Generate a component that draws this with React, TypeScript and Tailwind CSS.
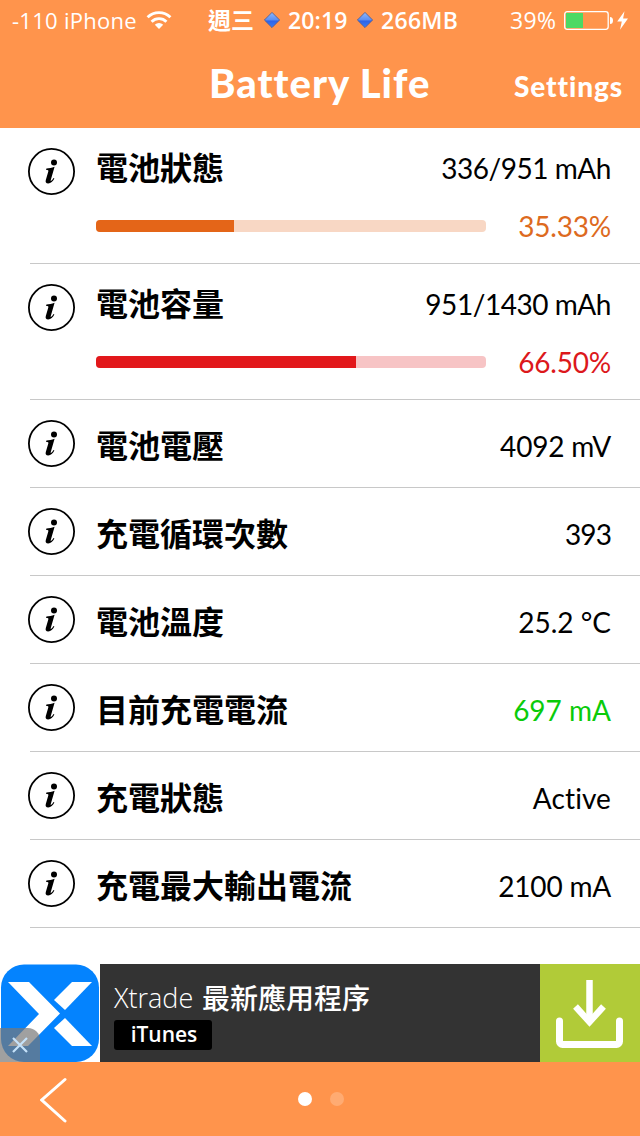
import React from "react";
import clsx from "clsx";

type Row = {
  label: string;
  value: string;
  valueClass: string;
  meter?: {
    percent: string;
    fill: number;
    track: string;
    bar: string;
    text: string;
  };
};

const InfoIcon = () => (
  <svg className="h-12 w-12 shrink-0" viewBox="0 0 48 48" fill="none">
    <circle cx="23.5" cy="23.5" r="22.6" stroke="#000" strokeWidth="1.8" />
    <circle cx="26" cy="14.5" r="3" fill="#000" />
    <path
      d="M18.400 20.500c2.800-.2 5.200-.7 8.200-1.700l-3.900 13.400c-.2.8.3.9.8.4.7-.7 1.400-1.600 2-2.600l.9.500c-1.500 2.700-3.600 5-6.200 5-2.200 0-3-1.500-2.400-3.500l2.500-8.600c.3-1.100-.1-1.500-2.200-1.500z"
      fill="#000"
    />
  </svg>
);

const Diamond = () => (
  <svg className="h-4 w-4 shrink-0" viewBox="0 0 16 16">
    <defs>
      <linearGradient id="gem" x1="0" y1="0" x2="0" y2="1">
        <stop offset="0" stopColor="#8db8fb" />
        <stop offset="0.5" stopColor="#5c8ef2" />
        <stop offset="0.56" stopColor="#2f63e6" />
        <stop offset="1" stopColor="#3a7cf4" />
      </linearGradient>
    </defs>
    <path d="M8 .4 15.600 8 8 15.600.4 8z" fill="url(#gem)" stroke="#42599b" strokeWidth="0.8" />
  </svg>
);

const StatusBar = () => {
  return (
    <div className="flex h-10 items-center font-['Open_Sans','Noto_Sans_CJK_TC',sans-serif] text-[22px] leading-10">
      <span className="ml-3 w-[126px] whitespace-nowrap tracking-[0.28px]">-110 iPhone</span>
      <svg className="ml-2 h-[18px] w-[26px]" viewBox="0 0 26 18" fill="none" stroke="#fff" strokeWidth="2.900">
        <path d="M1.600 6.300a16.300 16.300 0 0 1 22.800 0" />
        <path d="M5.600 10.700a10.500 10.500 0 0 1 14.800 0" />
        <path d="M13 18 8.800 13.800a6 6 0 0 1 8.400 0z" fill="#fff" stroke="none" />
      </svg>
      <div className="ml-9 flex items-center font-semibold">
        <span className="w-12 whitespace-nowrap text-[23px] font-bold">週三</span>
        <span className="ml-2 flex"><Diamond /></span>
        <span className="ml-2 w-[61px] whitespace-nowrap text-[23px] tracking-[0.1px]">20:19</span>
        <span className="ml-2 flex"><Diamond /></span>
        <span className="ml-2 w-20 whitespace-nowrap text-[23px] tracking-[0.3px]">266MB</span>
      </div>
      <span className="ml-[49px] w-[49px] whitespace-nowrap text-[23px] tracking-[0.4px]">39%</span>
      <svg className="h-5 w-[76px]" viewBox="0 0 76 20">
        <rect x="5.700" y="1.700" width="43.500" height="17.600" rx="2.500" fill="none" stroke="#fff" strokeWidth="1.300" />
        <rect x="7" y="3" width="17" height="15" fill="#4cd964" />
        <path d="M51 7a3 3.500 0 0 1 0 7z" fill="#fff" />
        <path d="M65.500 1.200 58.200 11.400h4.600L61 19.700 69 8.600h-4.900z" fill="#fff" />
      </svg>
    </div>
  );
};

const Header = () => {
  return (
    <header className="h-32 bg-[#ff944c] text-white">
      <StatusBar />
      <div className="grid h-[88px] grid-cols-[209px_221px_1fr] font-['Lato',sans-serif] font-black [font-variant-ligatures:none]">
        <h1 className="col-start-2 whitespace-nowrap text-[40px] leading-[86px] tracking-[1px]">
          Battery Life
        </h1>
        <button className="mr-[17px] whitespace-nowrap text-right text-[28px] leading-[92px] tracking-[0.9px]">
          Settings
        </button>
      </div>
    </header>
  );
};

const BatteryRow = ({ label, value, valueClass, meter }: Row) => {
  return (
    <li
      className={clsx(
        "ml-[30px] flex border-b border-[#c8c8c8]",
        meter ? "h-[136px]" : "h-[88px]",
      )}
    >
      <div className="-ml-0.5 pt-5">
        <InfoIcon />
      </div>
      <div className={clsx("ml-5 mr-[29px] flex-1", meter ? "pt-4" : "pt-[22px]")}>
        <div className="flex h-12 items-center justify-between whitespace-nowrap">
          <span className="pb-1 font-['Noto_Sans_CJK_TC',sans-serif] text-[32px] font-bold leading-[48px]">
            {label}
          </span>
          <span className={clsx("font-['Lato',sans-serif] text-[28px] [font-variant-ligatures:none]", valueClass)}>
            {value}
          </span>
        </div>
        {meter && (
          <div className="mt-2.5 flex h-12 items-center justify-between">
            <div className={clsx("h-3 w-[390px] overflow-hidden rounded", meter.track)}>
              <div className={clsx("h-full", meter.bar)} style={{ width: meter.fill }} />
            </div>
            <span className={clsx("font-['Lato',sans-serif] text-[28px] tracking-[-0.2px]", meter.text)}>
              {meter.percent}
            </span>
          </div>
        )}
      </div>
    </li>
  );
};

const AdBanner = () => {
  return (
    <div className="flex h-[98px] bg-[#333333] text-white">
      <div className="relative w-[100px] bg-white">
        <svg className="h-[98px] w-[100px]" viewBox="0 0 100 98">
          <rect x="1" y="0.500" width="98" height="97.500" rx="23" fill="#0483fe" />
          <path d="M8 18h21l31 31.500L28 82H8l31-32z" fill="#fff" />
          <path d="M54 36 72 18h20L65 46z" fill="#fff" />
          <path d="M54 64 65 54 92 82H72z" fill="#fff" />
        </svg>
        <div className="absolute bottom-0 left-0 flex h-[34px] w-10 items-center justify-center rounded-tr-xl bg-[#777777]/70">
          <svg className="h-4 w-4" viewBox="0 0 16 16" stroke="#c5e2fa" strokeWidth="2.200">
            <path d="m1 1 14 14M15 1 1 15" />
          </svg>
        </div>
      </div>
      <div className="flex-1 pl-3.5 pt-[18px]">
        <p className="flex whitespace-nowrap font-['Open_Sans','Noto_Sans_CJK_TC',sans-serif] text-[28px] leading-8">
          <span className="w-[88px] text-[27px] font-light">Xtrade</span>
          <span className="font-medium">最新應用程序</span>
        </p>
        <span className="mt-1.5 flex h-[30px] w-[98px] items-center justify-center rounded-[3px] bg-black pb-0.5 pl-0.5 font-['Open_Sans',sans-serif] text-[21px] font-semibold leading-none">
          iTunes
        </span>
      </div>
      <div className="w-[100px] bg-[#b1cb38]">
        <svg className="h-[98px] w-[100px]" viewBox="0 0 100 98" fill="none" stroke="#fff">
          <path d="M49.500 16v42" strokeWidth="6.500" />
          <path d="M35.500 42.500 49.500 58 63.500 42.500" strokeWidth="6.500" />
          <path d="M19.500 57v20.500a3 3 0 0 0 3 3h54a3 3 0 0 0 3-3V57" strokeWidth="7" strokeLinecap="round" />
        </svg>
      </div>
    </div>
  );
};

const App = () => {
  return (
    <div className="flex h-[1136px] w-[640px] flex-col overflow-hidden bg-white text-black">
      <Header />
      <ul className="flex-1">
        {rows.map((row) => (
          <BatteryRow key={row.label} {...row} />
        ))}
      </ul>
      <AdBanner />
      <footer className="flex h-[74px] bg-[#ff944c]">
        <svg className="ml-10 mt-[15px] h-[46px] w-[27px]" viewBox="0 0 27 46" fill="none" stroke="#fff" strokeWidth="3">
          <path d="M25 2.500 1.800 23 25 44" strokeLinecap="round" />
        </svg>
        <div className="ml-[231px] mt-[30px] flex gap-[18px]">
          <span className="h-3.5 w-3.5 rounded-full bg-white" />
          <span className="h-3.5 w-3.5 rounded-full bg-[#ffab72]" />
        </div>
      </footer>
    </div>
  );
};

export default App;

const rows: Row[] = [
  {
    label: "電池狀態",
    value: "336/951 mAh",
    valueClass: "tracking-[-0.45px]",
    meter: {
      percent: "35.33%",
      fill: 138,
      track: "bg-[#f8d7c4]",
      bar: "bg-[#e46518]",
      text: "text-[#dd6a20]",
    },
  },
  {
    label: "電池容量",
    value: "951/1430 mAh",
    valueClass: "tracking-[-0.45px]",
    meter: {
      percent: "66.50%",
      fill: 260,
      track: "bg-[#f7c4c5]",
      bar: "bg-[#e2181b]",
      text: "text-[#dc181c]",
    },
  },
  { label: "電池電壓", value: "4092 mV", valueClass: "tracking-[-0.2px]" },
  { label: "充電循環次數", value: "393", valueClass: "tracking-[-0.9px]" },
  { label: "電池溫度", value: "25.2 °C", valueClass: "" },
  { label: "目前充電電流", value: "697 mA", valueClass: "text-[#0acb0a]" },
  { label: "充電狀態", value: "Active", valueClass: "tracking-[0.1px]" },
  { label: "充電最大輸出電流", value: "2100 mA", valueClass: "tracking-[-0.2px]" },
];
